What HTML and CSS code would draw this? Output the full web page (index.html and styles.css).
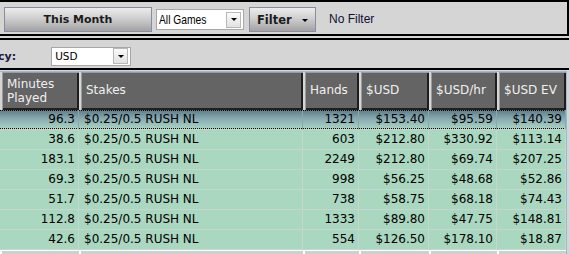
FILE: index.html
```html
<!DOCTYPE html>
<html>
<head>
<meta charset="utf-8">
<link rel="stylesheet" href="styles.css">
</head>
<body>
<div class="top">
  <div class="btn month">This Month</div>
  <div class="select games"><span class="val">All Games</span><span class="drop"><i class="arrow"></i></span></div>
  <div class="btn filter"><span>Filter</span><i class="arrow"></i></div>
  <span class="nofilter">No Filter</span>
</div>
<div class="rule"></div>
<div class="currency">
  <span class="label">Currency:</span>
  <div class="select usd"><span class="val">USD</span><span class="drop"><i class="arrow"></i></span></div>
</div>
<div class="sep"></div>
<div class="grid">
  <div class="hcell first"><span>Minutes<br>Played</span></div>
  <div class="hcell">Stakes</div>
  <div class="hcell">Hands</div>
  <div class="hcell">$USD</div>
  <div class="hcell">$USD/hr</div>
  <div class="hcell">$USD EV</div>

  <div class="cell num sel">96.3</div><div class="cell sel">$0.25/0.5 RUSH NL</div><div class="cell num sel">1321</div><div class="cell num sel">$153.40</div><div class="cell num sel">$95.59</div><div class="cell num sel">$140.39</div>
  <div class="cell num">38.6</div><div class="cell">$0.25/0.5 RUSH NL</div><div class="cell num">603</div><div class="cell num">$212.80</div><div class="cell num">$330.92</div><div class="cell num">$113.14</div>
  <div class="cell num">183.1</div><div class="cell">$0.25/0.5 RUSH NL</div><div class="cell num">2249</div><div class="cell num">$212.80</div><div class="cell num">$69.74</div><div class="cell num">$207.25</div>
  <div class="cell num">69.3</div><div class="cell">$0.25/0.5 RUSH NL</div><div class="cell num">998</div><div class="cell num">$56.25</div><div class="cell num">$48.68</div><div class="cell num">$52.86</div>
  <div class="cell num">51.7</div><div class="cell">$0.25/0.5 RUSH NL</div><div class="cell num">738</div><div class="cell num">$58.75</div><div class="cell num">$68.18</div><div class="cell num">$74.43</div>
  <div class="cell num">112.8</div><div class="cell">$0.25/0.5 RUSH NL</div><div class="cell num">1333</div><div class="cell num">$89.80</div><div class="cell num">$47.75</div><div class="cell num">$148.81</div>
  <div class="cell num">42.6</div><div class="cell">$0.25/0.5 RUSH NL</div><div class="cell num">554</div><div class="cell num">$126.50</div><div class="cell num">$178.10</div><div class="cell num">$18.87</div>

  <div class="fcell"></div><div class="fcell"></div><div class="fcell"></div><div class="fcell"></div><div class="fcell"></div><div class="fcell"></div>
</div>
</body>
</html>
```
FILE: styles.css
```css
html, body {
  margin: 0;
  padding: 0;
  overflow: hidden;
  background: #d5d5d5;
  width: 569px;
  height: 254px;
}
body {
  font-family: "DejaVu Sans", Verdana, sans-serif;
  font-size: 12px;
  color: #000;
}
.top {
  box-sizing: border-box;
  height: 34px;
  border-top: 2px solid #000;
  border-right: 2px solid #000;
  display: flex;
  align-items: flex-start;
  padding: 5px 0 0 4px;
}
.btn {
  box-sizing: border-box;
  height: 25px;
  border: 1px solid #8a8aa2;
  background: linear-gradient(#ececec, #cfcfcf 45%, #a2a2a2);
  font-family: "DejaVu Sans", Verdana, sans-serif;
  font-weight: bold;
  font-size: 11px;
  color: #1c1c1c;
  display: flex;
  align-items: center;
  justify-content: center;
}
.month {
  width: 148px;
}
.filter {
  width: 67px;
  margin-left: 5px;
  justify-content: flex-start;
  padding-left: 7px;
  font-size: 11.5px;
}
.filter .arrow {
  margin-left: 10px;
  margin-top: 2px;
}
.select {
  box-sizing: border-box;
  background: #fff;
  border: 1px solid #a8a8a8;
  display: flex;
  align-items: center;
  justify-content: space-between;
  padding: 0 2px 0 2px;
}
.games {
  width: 88px;
  height: 21px;
  margin-left: 4px;
  margin-top: 2px;
}
.games .val {
  display: inline-block;
  width: 47px;
  white-space: nowrap;
  font-family: "Liberation Sans", Arial, sans-serif;
  font-size: 13px;
  color: #000;
  transform: scaleX(0.79);
  transform-origin: 0 50%;
}
.drop {
  box-sizing: border-box;
  width: 15px;
  height: 16px;
  background: linear-gradient(#fafafa, #e2e2e2);
  border: 1px solid #b8b8b8;
  display: flex;
  align-items: center;
  justify-content: center;
}
.arrow {
  display: block;
  width: 0;
  height: 0;
  border-left: 3px solid transparent;
  border-right: 3px solid transparent;
  border-top: 3px solid #000;
}
.nofilter {
  font-family: "Liberation Sans", Arial, sans-serif;
  font-size: 12px;
  color: #101030;
  margin-left: 13px;
  margin-top: 5px;
}
.rule {
  height: 2px;
  border-top: 2px solid #000;
  border-bottom: 2px solid #000;
}
.currency {
  height: 28px;
  display: flex;
  align-items: center;
}
.label {
  font-family: "DejaVu Sans", Verdana, sans-serif;
  font-weight: bold;
  font-size: 11px;
  color: #1a1a3c;
  margin-left: -44px;
  margin-top: 5px;
}
.usd {
  width: 80px;
  height: 19px;
  margin-left: 35px;
  margin-top: 4px;
}
.usd .val {
  font-size: 10.5px;
  padding-left: 1px;
}
.sep {
  height: 2px;
  background: #000;
}
.grid {
  margin-top: 1px;
  width: 566px;
  border-top: 1px solid #9cb8d6;
  border-right: 1px solid #9cb8d6;
  display: grid;
  grid-template-columns: 79px 224px 56px 70px 68px 69px;
  grid-template-rows: 38px repeat(7, 20px) 5px;
}
.hcell {
  box-sizing: border-box;
  margin-left: 2px;
  background: #646464;
  box-shadow: inset 1px 1px 0 #9c9c9c, inset -2px -2px 0 #1e1e1e;
  color: #f0f0f0;
  display: flex;
  align-items: center;
  padding: 0 0 2px 5px;
  font-size: 12px;
  line-height: 14px;
}
.hcell.first {
  padding-top: 1px;
}
.cell {
  box-sizing: border-box;
  background: #aad7bf;
  border-right: 1px solid #c6d6ce;
  border-bottom: 1px solid #c6d6ce;
  line-height: 19px;
  padding: 0 4px 0 5px;
  white-space: nowrap;
  overflow: hidden;
}
.num {
  text-align: right;
  padding-right: 3px;
}
.sel {
  background:
    repeating-linear-gradient(90deg, #000 0 1px, transparent 1px 2px) 0 0 / 100% 1px no-repeat,
    repeating-linear-gradient(90deg, #000 0 1px, transparent 1px 2px) 0 18px / 100% 1px no-repeat,
    linear-gradient(#5c7c86, #87aab0 45%, #abd4c2);
  border-right-color: #8aa8a4;
}
.fcell {
  box-sizing: border-box;
  background: #cfcfcf;
  border-top: 1px solid #fff;
  border-left: 2px solid #fff;
}
```
